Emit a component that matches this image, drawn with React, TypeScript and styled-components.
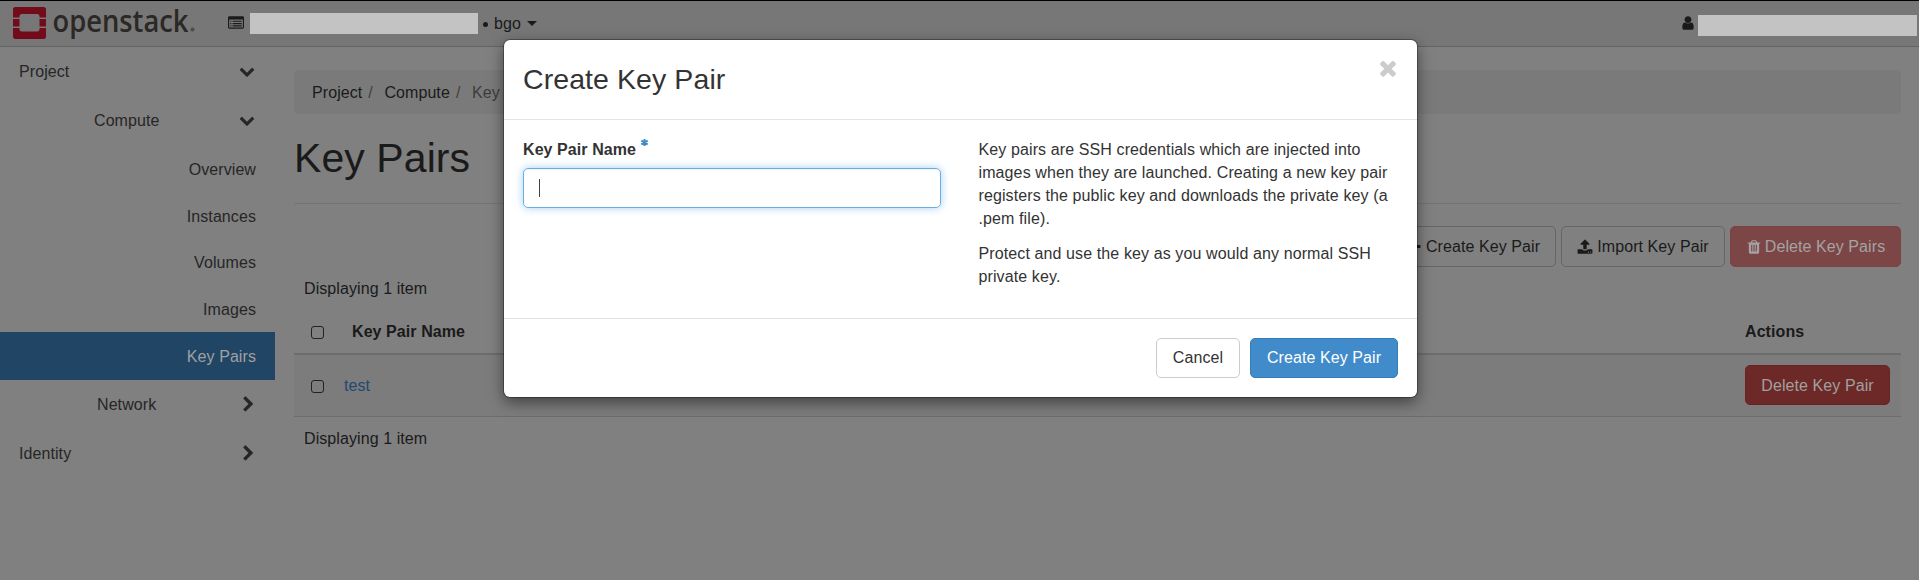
import React from 'react';
import styled, { createGlobalStyle } from 'styled-components';

const Global = createGlobalStyle`
  * { box-sizing: border-box; }
  html, body { margin: 0; height: 580px; overflow: hidden; background: #fff; }
  body { font: 16px/23px "Liberation Sans", Arial, sans-serif; letter-spacing: .08px; color: #333; }
  h1, h3, p { margin: 0; font-weight: 400; }
`;

const paths = {
  down: 'M1683 808l-742 741q-19 19-45 19t-45-19l-742-741q-19-19-19-45.5t19-45.5l166-165q19-19 45-19t45 19l531 531 531-531q19-19 45-19t45 19l166 165q19 19 19 45.5t-19 45.5z',
  right: 'M1363 877l-742 742q-19 19-45 19t-45-19l-166-166q-19-19-19-45t19-45l531-531-531-531q-19-19-19-45t19-45l166-166q19-19 45-19t45 19l742 742q19 19 19 45t-19 45z',
  times: 'M1490 1322q0 40-28 68l-136 136q-28 28-68 28t-68-28l-294-294-294 294q-28 28-68 28t-68-28l-136-136q-28-28-28-68t28-68l294-294-294-294q-28-28-28-68t28-68l136-136q28-28 68-28t68 28l294 294 294-294q28-28 68-28t68 28l136 136q28 28 28 68t-28 68l-294 294 294 294q28 28 28 68z',
  user: 'M1536 1399q0 109-62.5 187t-150.5 78h-854q-88 0-150.5-78t-62.5-187q0-85 8.5-160.5t31.5-152 58.5-131 94-89 134.5-34.5q131 128 313 128t313-128q76 0 134.5 34.5t94 89 58.5 131 31.5 152 8.5 160.5zm-256-887q0 159-112.5 271.5t-271.5 112.5-271.5-112.5-112.5-271.5 112.5-271.5 271.5-112.5 271.5 112.5 112.5 271.5z',
  trash: 'M704 1376v-704q0-14-9-23t-23-9h-64q-14 0-23 9t-9 23v704q0 14 9 23t23 9h64q14 0 23-9t9-23zm256 0v-704q0-14-9-23t-23-9h-64q-14 0-23 9t-9 23v704q0 14 9 23t23 9h64q14 0 23-9t9-23zm256 0v-704q0-14-9-23t-23-9h-64q-14 0-23 9t-9 23v704q0 14 9 23t23 9h64q14 0 23-9t9-23zm-544-992h448l-48-117q-7-9-17-11h-317q-10 2-17 11zm928 32v64q0 14-9 23t-23 9h-96v948q0 83-47 143.5t-113 60.5h-832q-66 0-113-58.5t-47-141.5v-952h-96q-14 0-23-9t-9-23v-64q0-14 9-23t23-9h309l70-167q15-37 54-63t79-26h320q40 0 79 26t54 63l70 167h309q14 0 23 9t9 23z',
  upload: 'M1344 1472q0-26-19-45t-45-19-45 19-19 45 19 45 45 19 45-19 19-45zm256 0q0-26-19-45t-45-19-45 19-19 45 19 45 45 19 45-19 19-45zm128-224v320q0 40-28 68t-68 28h-1472q-40 0-68-28t-28-68v-320q0-40 28-68t68-28h427q21 56 70.5 92t110.5 36h256q61 0 110.5-36t70.5-92h427q40 0 68 28t28 68zm-325-648q-17 40-59 40h-256v448q0 26-19 45t-45 19h-256q-26 0-45-19t-19-45v-448h-256q-42 0-59-40-17-39 14-69l448-448q18-19 45-19t45 19l448 448q31 30 14 69z',
  plus: 'M1600 736v192q0 40-28 68t-68 28h-416v416q0 40-28 68t-68 28h-192q-40 0-68-28t-28-68v-416h-416q-40 0-68-28t-28-68v-192q0-40 28-68t68-28h416v-416q0-40 28-68t68-28h192q40 0 68 28t28 68v416h416q40 0 68 28t28 68z',
  list: 'M256 1152h128v128h-128zM256 896h128v128h-128zM256 640h128v128h-128zM512 1152h1024v128h-1024zM512 896h1024v128h-1024zM512 640h1024v128h-1024zM1664 1376v-832q0-32-32-32h-1472q-32 0-32 32v832q0 32 32 32h1472q32 0 32-32zM1792 288v1088q0 66-47 113t-113 47h-1472q-66 0-113-47t-47-113v-1088q0-66 47-113t113-47h1472q66 0 113 47t47 113z',
};

const Svg = styled.svg`flex: none; display: block; fill: currentColor; overflow: visible;`;
const Icon = ({ name, size = 16 }: { name: keyof typeof paths; size?: number }) => (
  <Svg width={size} height={size} viewBox="0 0 1792 1792"><path d={paths[name]} fillRule="evenodd" /></Svg>
);

const Page = styled.div`height: 580px; display: flex; flex-direction: column; background: #808080; color: #1a1a1a;`;

const Navbar = styled.header`
  height: 47px; flex: none; display: flex; align-items: flex-start;
  background: #777; border-top: 1px solid #000; border-bottom: 1px solid #646464; padding-left: 12px;
`;
const Logo = styled.svg`display: block; margin-top: 5px; width: 188px; height: 36px; flex: none; overflow: visible;`;
const Context = styled.div`display: flex; margin: 12px 0 0 28px; height: 21px; width: 310px;`;
const ContextIcon = styled.span`margin: 2px 6px 0 0;`;
const Redacted = styled.span<{ $w: number }>`width: ${p => p.$w}px; height: 21px; flex: none; background: #c3c3c3;`;
const Dot = styled.span`width: 5px; height: 5px; border-radius: 50%; background: #1a1a1a; margin: 9px 6px 0 5px;`;
const ContextName = styled.span`line-height: 22px;`;
const Caret = styled.span`
  width: 0; height: 0; margin: 8px 0 0 6px; border: 5px solid transparent; border-bottom: 0; border-top-color: #1a1a1a;
`;
const UserBox = styled.div`display: flex; margin: 14px 2px 0 auto; gap: 2px;`;

const Columns = styled.div`flex: 1; display: flex;`;
const Sidebar = styled.nav`width: 275px; flex: none; color: #262626;`;
const Group = styled.div<{ $h: number; $left: number; $right: number }>`
  height: ${p => p.$h}px; display: flex; align-items: center; justify-content: space-between;
  padding: 0 ${p => p.$right}px 0 ${p => p.$left}px;
  svg { margin-bottom: 1px; }
`;
const Item = styled.div<{ $active?: boolean; $h: number }>`
  height: ${p => p.$h}px; display: flex; align-items: center; justify-content: flex-end; padding: 1px 19px 0 0;
  ${p => p.$active && 'background: #214665; color: #a0a0a0;'}
`;

const Content = styled.main`flex: 1; min-width: 0; padding: 23px 18px 0 19px;`;
const Breadcrumb = styled.div`
  height: 44px; border-radius: 5px; background: #7a7a7a; padding: 1px 0 0 18px; display: flex; align-items: center;
`;
const Crumb = styled.span<{ $last?: boolean }>`
  color: ${p => (p.$last ? '#3c3c3c' : '#1a1a1a')};
  &:not(:last-child)::after { content: "/"; color: #3f3f3f; padding: 0 11.5px 0 6px; }
`;
const Title = styled.h1`font-size: 41px; line-height: 46px; height: 90px; padding-top: 21px; border-bottom: 1px solid #747474;`;
const Toolbar = styled.div`display: flex; justify-content: flex-end; gap: 5px; margin-top: 22px;`;

const looks = {
  plain: 'border-color: #666; color: #1a1a1a;',
  faded: 'border-color: #7c4343; background: #7c4646; color: #a3a3a3; gap: 3px;',
  danger: 'border-color: #6a2423; background: #6d2927; color: #a0a0a0; padding-top: 1px; margin-bottom: 1px;',
  cancel: 'border-color: #ccc; background: #fff; color: #333; padding-bottom: 1px;',
  primary: 'border-color: #357ebd; background: #428bca; color: #fff; padding-bottom: 1px;',
};
const Button = styled.button<{ $look: keyof typeof looks; $w: number; $h?: number }>`
  width: ${p => p.$w}px; height: ${p => p.$h ?? 41}px; padding: 0;
  display: flex; align-items: center; justify-content: center; gap: 4px;
  border: 1px solid; border-radius: 5px; background: transparent; font: inherit; letter-spacing: inherit; white-space: nowrap;
  ${p => looks[p.$look]}
`;
const Count = styled.div<{ $h: number }>`height: ${p => p.$h}px; display: flex; align-items: center; padding: 0 0 1px 10px;`;
const Table = styled.div`display: grid; grid-template-columns: 50px 1fr 166px;`;
const Cell = styled.div<{ $h: number; $head?: boolean; $pad: number }>`
  height: ${p => p.$h}px; display: flex; align-items: center; padding-left: ${p => p.$pad}px;
  ${p => (p.$head
    ? 'padding-bottom: 1px; font-weight: 700; border-bottom: 2px solid #6d6d6d;'
    : 'background: #7c7c7c; border-bottom: 1px solid #6d6d6d;')}
`;
const Check = styled.span`width: 13px; height: 13px; border: 1px solid #222; border-radius: 3px; margin-top: 2px;`;
const Link = styled.a`color: #214a70;`;

const Dialog = styled.section`
  position: absolute; left: 504px; top: 40px; width: 913px; height: 357px; background: #fff; color: #333;
  border-radius: 6px; box-shadow: 0 0 0 1px rgba(0,0,0,.3), 0 5px 15px rgba(0,0,0,.5);
  display: flex; flex-direction: column;
`;
const DialogHead = styled.div`
  height: 80px; flex: none; display: flex; justify-content: space-between; padding: 22px 17px 0 19px; border-bottom: 1px solid #e3e3e3;
`;
const DialogTitle = styled.h3`font-size: 28.5px; line-height: 34px;`;
const Close = styled.span`color: #ccc; margin-top: -6px;`;
const DialogBody = styled.div`flex: 1; display: flex; padding: 18px 19px 0;`;
const Field = styled.div`width: 418px; margin-right: 38px;`;
const Label = styled.label`display: flex; font-weight: 700; height: 30px; svg { margin-top: 1px; }`;
const Input = styled.div`
  height: 40px; border: 1px solid #66afe9; border-radius: 5px; padding: 10px 15px;
  box-shadow: inset 0 1px 1px rgba(0,0,0,.06), 0 0 8px rgba(102,175,233,.6);
`;
const Cursor = styled.span`display: block; width: 1px; height: 18px; background: #444;`;
const Help = styled.div`width: 420px; letter-spacing: .11px; p + p { margin-top: 12px; }`;
const DialogFoot = styled.div`
  height: 79px; flex: none; display: flex; justify-content: flex-end; gap: 10px; padding: 19px 19px 0; border-top: 1px solid #e3e3e3;
`;

export default function App() {
  return (
    <>
      <Global />
      <Page>
        <Navbar>
          <Logo viewBox="12 6 188 36">
            <path fill="#730c1a" d="M15.500 7H43.500Q46 7 46 9.500V17.500H39.500V16.500Q39.500 14 37 14H22Q19.500 14 19.500 16.500V17.500H13V9.500Q13 7 15.500 7ZM13 19H19.500V26.500H13ZM39.500 19H46V26.500H39.500ZM13 28H19.500V29Q19.500 31.500 22 31.500H37Q39.500 31.500 39.500 29V28H46V36.500Q46 39 43.500 39H15.500Q13 39 13 36.500Z" />
            <text x="52.500" y="31.500" fontFamily="Open Sans" fontWeight="600" fontSize="30" letterSpacing="0" fill="#2b2825" textLength="136" lengthAdjust="spacingAndGlyphs">openstack</text>
            <circle cx="192.500" cy="29.500" r="1.500" fill="#555" stroke="#3b3835" strokeWidth=".8" />
          </Logo>
          <Context>
            <ContextIcon><Icon name="list" /></ContextIcon>
            <Redacted $w={228} />
            <Dot /><ContextName>bgo</ContextName><Caret />
          </Context>
          <UserBox><Icon name="user" /><Redacted $w={219} /></UserBox>
        </Navbar>
        <Columns>
          <Sidebar>
            <Group $h={49} $left={19} $right={20}>Project<Icon name="down" /></Group>
            <Group $h={49} $left={94} $right={20}>Compute<Icon name="down" /></Group>
            <Item $h={47}>Overview</Item>
            <Item $h={47}>Instances</Item>
            <Item $h={46}>Volumes</Item>
            <Item $h={47}>Images</Item>
            <Item $h={48} $active>Key Pairs</Item>
            <Group $h={49} $left={97} $right={18}>Network<Icon name="right" size={17} /></Group>
            <Group $h={49} $left={19} $right={18}>Identity<Icon name="right" size={17} /></Group>
          </Sidebar>
          <Content>
            <Breadcrumb><Crumb>Project</Crumb><Crumb>Compute</Crumb><Crumb $last>Key</Crumb></Breadcrumb>
            <Title>Key Pairs</Title>
            <Toolbar>
              <Button $look="plain" $w={164}><Icon name="plus" size={14} />Create Key Pair</Button>
              <Button $look="plain" $w={164}><Icon name="upload" />Import Key Pair</Button>
              <Button $look="faded" $w={171}><Icon name="trash" />Delete Key Pairs</Button>
            </Toolbar>
            <Count $h={44}>Displaying 1 item</Count>
            <Table>
              <Cell $head $h={44} $pad={17}><Check /></Cell>
              <Cell $head $h={44} $pad={8}>Key Pair Name</Cell>
              <Cell $head $h={44} $pad={10}>Actions</Cell>
              <Cell $h={62} $pad={17}><Check /></Cell>
              <Cell $h={62} $pad={0}><Link>test</Link></Cell>
              <Cell $h={62} $pad={10}><Button $look="danger" $w={145} $h={40}>Delete Key Pair</Button></Cell>
            </Table>
            <Count $h={44}>Displaying 1 item</Count>
          </Content>
        </Columns>
      </Page>
      <Dialog>
        <DialogHead>
          <DialogTitle>Create Key Pair</DialogTitle>
          <Close><Icon name="times" size={24} /></Close>
        </DialogHead>
        <DialogBody>
          <Field>
            <Label>
              Key Pair Name
              <Svg width="18" height="10" viewBox="0 0 18 10"><path d="M8.500 0v7M5.300 1.700l6.400 3.600M5.300 5.300l6.400-3.600" stroke="#428bca" strokeWidth="2" /></Svg>
            </Label>
            <Input><Cursor /></Input>
          </Field>
          <Help>
            <p>Key pairs are SSH credentials which are injected into images when they are launched. Creating a new key pair registers the public key and downloads the private key (a .pem file).</p>
            <p>Protect and use the key as you would any normal SSH private key.</p>
          </Help>
        </DialogBody>
        <DialogFoot>
          <Button $look="cancel" $w={84} $h={40}>Cancel</Button>
          <Button $look="primary" $w={148} $h={40}>Create Key Pair</Button>
        </DialogFoot>
      </Dialog>
    </>
  );
}
